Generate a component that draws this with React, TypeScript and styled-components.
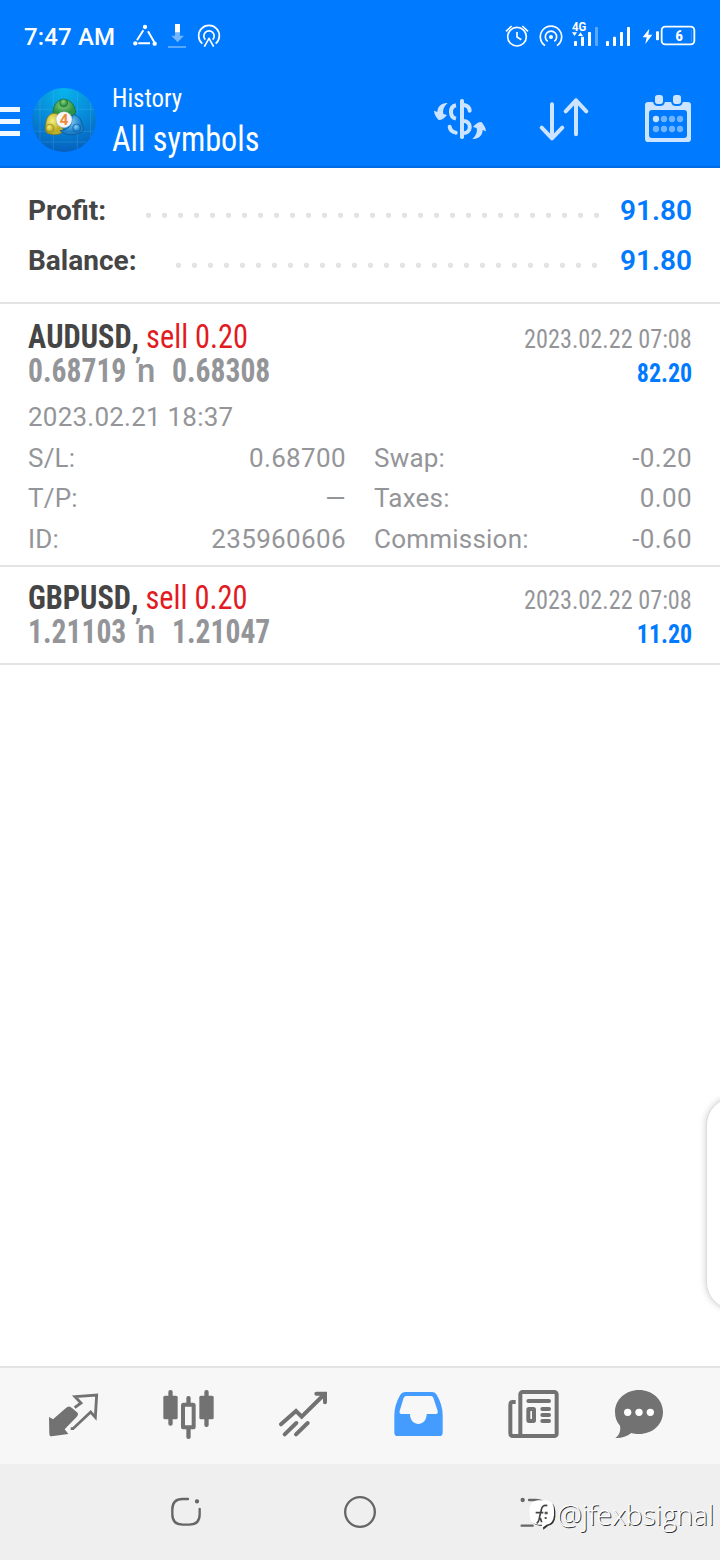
import React from 'react';
import styled, { createGlobalStyle } from 'styled-components';

const Global = createGlobalStyle`
  * { box-sizing: border-box; }
  body { margin: 0; background: #fff; font-family: Roboto, 'Liberation Sans', sans-serif; }
  svg { display: block; flex: none; }
`;

const Screen = styled.div`
  position: relative;
  width: 720px;
  height: 1560px;
  overflow: hidden;
  display: flex;
  flex-direction: column;
  background: #fff;
`;

/* Condensed text, narrowed around its left or right edge */
const Condensed = styled.div<{ $scale?: number; $from?: 'left' | 'right' }>`
  font-stretch: 75%;
  white-space: pre;
  transform: scaleX(${p => p.$scale ?? 0.921});
  transform-origin: ${p => p.$from ?? 'left'} center;
`;

const TopArea = styled.header`
  background: #007aff;
  border-bottom: 2px solid #006de4;
  height: 168px;
  color: #fff;
  flex: none;
`;
const StatusBar = styled.div`
  height: 72px;
  display: flex;
  justify-content: space-between;
  padding: 0 20px 0 24px;
`;
const StatusSide = styled.div`
  display: flex;
`;
const Clock = styled.span`
  font-size: 24px;
  font-weight: 500;
  line-height: 74px;
  width: 106px;
  letter-spacing: 0.15px;
  white-space: nowrap;
`;
const AppBar = styled.div`
  display: flex;
  height: 94px;
`;
const MenuButton = styled.div`
  width: 32px;
  padding-top: 35px;
  display: flex;
  flex-direction: column;
  gap: 7px;
`;
const MenuBar = styled.i`
  width: 20px;
  height: 5px;
  background: #eff7ff;
`;
const LogoBox = styled.div`
  padding-top: 16px;
  width: 80px;
`;
const Titles = styled.div`
  width: 296px;
  padding-top: 10px;
`;
const Subtitle = styled(Condensed)`
  font-size: 26px;
  line-height: 32px;
`;
const Title = styled(Condensed)`
  font-size: 35px;
  line-height: 51px;
`;

const Summary = styled.section`
  border-bottom: 2px solid #e4e4e4;
  padding: 18px 28px 16px;
  height: 136px;
  flex: none;
`;
const SummaryRow = styled.div`
  display: flex;
  font-size: 28px;
  line-height: 50px;
  font-weight: 700;
`;
const SummaryLabel = styled.span<{ $width: number }>`
  width: ${p => p.$width}px;
  color: #454545;
`;
const Dots = styled.span`
  flex: 1;
  height: 6px;
  margin: 26px 19px 0 0;
  background: radial-gradient(circle at 2.5px 3.3px, #e3e3e3 2.2px, transparent 3px) 0 0 / 16px 6px repeat-x;
`;
const SummaryValue = styled.span`
  width: 72px;
  text-align: right;
  color: #007aff;
  font-weight: 600;
`;

const Trade = styled.article<{ $top: number; $bottom: number }>`
  border-bottom: 2px solid #e4e4e4;
  padding: ${p => p.$top}px 28px ${p => p.$bottom}px;
  flex: none;
`;
const TradeLine = styled.div`
  display: flex;
  justify-content: space-between;
  align-items: baseline;
  height: 34px;
  line-height: 34px;
`;
const Symbol = styled(Condensed)`
  font-size: 33px;
  font-weight: 700;
  font-kerning: none;
  color: #454545;
`;
const Side = styled.span`
  font-weight: 400;
  color: #e11b1f;
`;
const Prices = styled.div`
  display: flex;
  font-size: 32.5px;
  color: #949599;
`;
const Price = styled(Condensed)`
  width: 109px;
  font-weight: 700;
`;
const Marker = styled.span`
  width: 35px;
  font-size: 33px;
  font-weight: 500;
`;
const CloseTime = styled(Condensed)`
  font-size: 26px;
  color: #949599;
`;
const TradeProfit = styled(Condensed)`
  font-size: 26px;
  font-weight: 700;
  color: #007aff;
`;
const Details = styled.div`
  padding-top: 9px;
  font-size: 26px;
  line-height: 40.5px;
  letter-spacing: 0.22px;
  color: #949599;
  display: grid;
  grid-template-columns: 318px 318px;
  column-gap: 28px;
`;
const OpenTime = styled.div`
  grid-column: 1 / 3;
`;
const Detail = styled.div`
  display: flex;
  justify-content: space-between;
`;
const DetailValue = styled.span`
  letter-spacing: 0.36px;
`;

const Spacer = styled.main`
  flex: 1;
`;
const EdgePanel = styled.aside`
  position: absolute;
  left: 706px;
  top: 1097px;
  width: 70px;
  height: 213px;
  border-radius: 28px;
  background: #fff;
  border: 1px solid #dcdcdc;
  box-shadow: 0 0 7px rgba(0, 0, 0, 0.2);
`;

const TabBar = styled.nav`
  height: 98px;
  flex: none;
  border-top: 2px solid #e3e3e3;
  background: #f7f7f7;
  padding-left: 16px;
  display: flex;
`;
const SystemBar = styled.footer`
  height: 96px;
  flex: none;
  background: #efefef;
  padding-left: 99px;
  display: flex;
`;
const Watermark = styled.div`
  position: absolute;
  left: 529px;
  top: 1495px;
  display: flex;
  align-items: center;
  height: 40px;
`;
const Handle = styled.span`
  font: 300 28px/36px 'Open Sans', sans-serif;
  padding-bottom: 2px;
  color: #fff;
  text-shadow: 1px 1px 0.5px #333;
`;

const TabIcon = ({ x, children }: { x: number; children: React.ReactNode }) => (
  <svg width="115" height="96" viewBox={`${x} 24 345 288`} fill="#727272" stroke="none">{children}</svg>
);
const ActionIcon = ({ x, children }: { x: number; children: React.ReactNode }) => (
  <svg width="104" height="94" viewBox={`${x} 216 312 282`} fill="#cce4ff">{children}</svg>
);
const SystemIcon = ({ x, children }: { x: number; children?: React.ReactNode }) => (
  <svg width="174" height="96" viewBox={`${x} -18 522 288`} fill="none" stroke="#666" strokeWidth="7" strokeLinecap="round">
    {children}
  </svg>
);

const LeftStatusIcons = () => (
  <svg width="100" height="72" viewBox="390 0 300 216" fill="none" stroke="#fff" strokeWidth="6">
    <path d="M430 91L411 121M444 94L463 127M415 130H450" />
    <g fill="#fff" stroke="none">
      <circle cx="435" cy="81" r="6.5" /><circle cx="406" cy="130" r="6.5" /><circle cx="464" cy="131" r="6.5" />
      <path d="M525 72h15v25h-15z" />
      <path d="M525 97h15v10h12l-19 20l-19-20h11z" opacity=".45" />
      <path d="M504 138h54v6h-54z" opacity=".35" />
    </g>
    <path d="M607 131A31 31 0 1 1 647 131" strokeWidth="5" />
    <path d="M616 119A15.500 15.500 0 1 1 638 119" strokeWidth="5" />
    <path d="M613 140L627 115L641 140" strokeWidth="5" strokeLinejoin="round" />
  </svg>
);

const RightStatusIcons = () => (
  <svg width="200" height="72" viewBox="240 0 600 216" fill="none" stroke="#fff" strokeWidth="5">
    <circle cx="291" cy="110" r="28" />
    <path d="M291 96V111L304 119M258 94L275 78M307 78L324 94" />
    <path d="M375 137A32 32 0 1 1 411 137" />
    <path d="M383 124A17 17 0 1 1 403 124" />
    <g fill="#fff" stroke="none">
      <circle cx="393" cy="111" r="6" />
      <text x="456" y="93" fontFamily="Roboto" fontWeight="700" fontSize="37" textLength="43" lengthAdjust="spacingAndGlyphs">4G</text>
      <path d="M456 97h15l-7.500 11zM474 108h15l-7.500-11z" />
      <rect x="462" y="123" width="9" height="15" rx="2" /><rect x="483" y="110" width="9" height="28" rx="2" />
      <rect x="504" y="96" width="9" height="42" rx="2" /><rect x="525" y="81" width="9" height="57" rx="2" opacity=".35" />
      <rect x="558" y="123" width="9" height="15" rx="2" /><rect x="579" y="110" width="9" height="28" rx="2" />
      <rect x="600" y="96" width="9" height="42" rx="2" /><rect x="621" y="81" width="9" height="57" rx="2" />
      <path d="M688 86L668 112H680L676 132L697 104H685z" />
      <rect x="708" y="94" width="9" height="27" rx="3" />
      <text x="777" y="122" fontFamily="Roboto" fontWeight="700" fontSize="46" textAnchor="middle" fontStretch="75%">6</text>
    </g>
    <rect x="725" y="80" width="98" height="53" rx="11" strokeWidth="5.5" />
    <path d="M814 88V126" strokeWidth="2" opacity=".3" />
  </svg>
);

const Logo = () => (
  <svg width="64" height="64" viewBox="12 12 192 192">
    <defs>
      <radialGradient id="disc" cx=".5" cy=".05" r=".95">
        <stop offset="0" stopColor="#08b4ec" /><stop offset=".5" stopColor="#078cda" /><stop offset="1" stopColor="#0560bd" />
      </radialGradient>
      <radialGradient id="green" cx=".45" cy=".35"><stop offset="0" stopColor="#8ed07c" /><stop offset="1" stopColor="#2c9445" /></radialGradient>
      <radialGradient id="gold" cx=".4" cy=".35"><stop offset="0" stopColor="#f6ef7c" /><stop offset="1" stopColor="#bcae28" /></radialGradient>
      <radialGradient id="azure" cx=".4" cy=".35"><stop offset="0" stopColor="#84d2fa" /><stop offset="1" stopColor="#1c7fca" /></radialGradient>
      <clipPath id="round"><circle cx="108" cy="108" r="96" /></clipPath>
    </defs>
    <circle cx="108" cy="108" r="96" fill="url(#disc)" />
    <path clipPath="url(#round)" d="M36 0V216M76 0V216M148 0V216M188 0V216M0 76H216M0 142H216M0 174H216" stroke="#7fd0ff" strokeOpacity=".18" strokeWidth="3" />
    <path d="M107 46C128 46 143 66 142 84C141 94 134 98 127 94C114 80 101 80 88 94C78 98 73 88 76 76C80 58 92 46 107 46z" fill="url(#green)" stroke="#11602b" strokeWidth="2" />
    <path d="M79 88C64 88 54 102 53 122C50 134 52 148 66 150C84 154 99 152 104 142C108 132 101 128 92 124C84 118 84 108 90 96C90 90 86 88 79 88z" fill="url(#gold)" stroke="#7d7212" strokeWidth="2" />
    <path d="M139 92C153 96 162 110 163 124C170 132 166 146 152 148C134 155 112 154 96 140C114 138 128 130 131 114C132 104 130 92 139 92z" fill="url(#azure)" stroke="#0b4b86" strokeWidth="2" />
    <circle cx="107" cy="57" r="12" fill="url(#green)" stroke="#11602b" strokeWidth="1.500" />
    <circle cx="66" cy="133" r="12" fill="url(#gold)" stroke="#7d7212" strokeWidth="1.500" />
    <circle cx="146" cy="132" r="12" fill="url(#azure)" stroke="#0b4b86" strokeWidth="1.500" />
    <circle cx="108" cy="107" r="24" fill="#f7f7f7" stroke="#aebfc8" strokeWidth="1.500" />
    <text x="108" y="123" fontFamily="Roboto" fontWeight="700" fontSize="45" textAnchor="middle" fill="#f18a35">4</text>
  </svg>
);

const SwapArrow = () => (
  <path d="M83 309C64 308 53 319 52 336L42 332C43 345 50 353 56 360C66 360 74 354 81 345L70 342C67 330 72 319 83 309z" />
);

const trades = [
  {
    symbol: 'AUDUSD', side: 'sell 0.20', open: '0.68719', close: '0.68308', time: '2023.02.22 07:08', profit: '82.20',
    opened: '2023.02.21 18:37',
    details: [['S/L:', '0.68700'], ['Swap:', '-0.20'], ['T/P:', '—'], ['Taxes:', '0.00'], ['ID:', '235960606'], ['Commission:', '-0.60']],
  },
  { symbol: 'GBPUSD', side: 'sell 0.20', open: '1.21103', close: '1.21047', time: '2023.02.22 07:08', profit: '11.20' },
];

export default function App() {
  return (
    <Screen>
      <Global />
      <TopArea>
        <StatusBar>
          <StatusSide><Clock>7:47 AM</Clock><LeftStatusIcons /></StatusSide>
          <StatusSide><RightStatusIcons /></StatusSide>
        </StatusBar>
        <AppBar>
          <MenuButton><MenuBar /><MenuBar /><MenuBar /></MenuButton>
          <LogoBox><Logo /></LogoBox>
          <Titles>
            <Subtitle $scale={0.955}>History</Subtitle>
            <Title>All symbols</Title>
          </Titles>
          <ActionIcon x={-36}>
            <SwapArrow />
            <g transform="rotate(180 120 363)"><SwapArrow /></g>
            <rect x="120" y="297" width="12" height="120" rx="5" />
            <g fill="none" stroke="#cce4ff" strokeWidth="12">
              <path d="M108 316C88 320 88 351 108 356" />
              <path d="M132 315Q148 318 149 332" strokeLinecap="round" />
              <path d="M132 363C155 365 155 396 132 400" />
              <path d="M89 380Q91 394 107 398" strokeLinecap="round" />
            </g>
          </ActionIcon>
          <ActionIcon x={276}>
            <path d="M396 313V414M365 383L396 415L427 383M468 403V301M437 334L468 301L499 334" fill="none" stroke="#cce4ff" strokeWidth="12" strokeLinecap="round" strokeLinejoin="round" />
          </ActionIcon>
          <ActionIcon x={588}>
            <path fillRule="evenodd" d="M685 306H803Q813 306 813 316V416Q813 426 803 426H685Q675 426 675 416V316Q675 306 685 306zM696 330Q687 330 687 339V405Q687 414 696 414H792Q801 414 801 405V339Q801 330 792 330z" />
            <g stroke="#007aff" strokeWidth="6">
              <rect x="702" y="282" width="30" height="33" rx="11" /><rect x="756" y="282" width="30" height="33" rx="11" />
            </g>
            {[357, 387].map(y => [708, 732, 756, 780].map(x => (
              <circle key={`${x}-${y}`} cx={x} cy={y} r="9.500" fill={x === 708 && y === 357 ? '#cce4ff' : '#70b4ff'} />
            )))}
          </ActionIcon>
        </AppBar>
      </TopArea>

      <Summary>
        <SummaryRow><SummaryLabel $width={118}>Profit:</SummaryLabel><Dots /><SummaryValue>91.80</SummaryValue></SummaryRow>
        <SummaryRow><SummaryLabel $width={148}>Balance:</SummaryLabel><Dots /><SummaryValue>91.80</SummaryValue></SummaryRow>
      </Summary>

      {trades.map(t => (
        <Trade key={t.symbol} $top={t.details ? 16 : 14} $bottom={t.details ? 6 : 14}>
          <TradeLine>
            <Symbol>{t.symbol}, <Side>{t.side}</Side></Symbol>
            <CloseTime $scale={0.933} $from="right">{t.time}</CloseTime>
          </TradeLine>
          <TradeLine>
            <Prices>
              <Price $scale={0.91}>{t.open}</Price>
              <Marker>ŉ</Marker>
              <Price $scale={0.91}>{t.close}</Price>
            </Prices>
            <TradeProfit $scale={0.92} $from="right">{t.profit}</TradeProfit>
          </TradeLine>
          {t.details && (
            <Details>
              <OpenTime>{t.opened}</OpenTime>
              {t.details.map(([k, v]) => <Detail key={k}><span>{k}</span><DetailValue>{v}</DetailValue></Detail>)}
            </Details>
          )}
        </Trade>
      ))}
      <Spacer />

      <TabBar>
        <TabIcon x={-42}>
          <path d="M57 171L69 178L107 145Q117 134 126 144L141 157Q148 163 139 172L104 208L115 222L65 229Q58 229 58 221z" />
          <path d="M134 143L153 129L135 110L200 105L196 172L182 156L129 206H122" fill="none" stroke="#727272" strokeWidth="8.500" />
        </TabIcon>
        <TabIcon x={303}>
          <rect x="400" y="107" width="43" height="71" rx="5" /><rect x="415" y="90" width="13" height="107" rx="6" />
          <rect x="508" y="107" width="43" height="71" rx="5" /><rect x="523" y="90" width="13" height="111" rx="6" />
          <rect x="469" y="108" width="13" height="28" rx="6" /><rect x="469" y="200" width="13" height="37" rx="6" />
          <rect x="459" y="134" width="32" height="68" rx="2" fill="none" stroke="#727272" strokeWidth="12" />
        </TabIcon>
        <TabIcon x={648}>
          <path d="M753 193L798 153L815 170L884 102M859 101H885V127M764 223L799 189M798 223L833 189" fill="none" stroke="#727272" strokeWidth="12" strokeLinecap="round" />
        </TabIcon>
        <TabIcon x={-27}>
          <path fill="#449cff" fillRule="evenodd" d="M105 96H187Q196 96 200 104Q218 135 218 165V218Q218 228 208 228H83Q73 228 73 218V165Q73 135 91 104Q96 96 105 96zM108 108Q104 108 101 113L89 153Q87 162 94 162H120C120 202 170 202 170 162H197Q205 162 203 153L190 113Q188 108 183 108z" />
        </TabIcon>
        <TabIcon x={318}>
          <g fill="none" stroke="#727272">
            <rect x="451" y="96" width="109" height="132" rx="7" strokeWidth="12" />
            <path d="M437 126H428Q421 126 421 135V220Q421 228 429 228H455" strokeWidth="12" />
            <path d="M475 123H537M517 147H537M517 165H537M517 183H537" strokeWidth="12" strokeLinecap="round" />
            <rect x="475" y="147" width="17" height="36" rx="2" strokeWidth="12" />
          </g>
        </TabIcon>
        <TabIcon x={663}>
          <path d="M807 90C847 90 879 119 879 156C879 194 847 222 807 222C798 222 791 221 784 219C770 230 753 235 736 234C747 226 753 213 750 197C740 186 735 172 735 156C735 119 767 90 807 90z" />
          <g fill="#fff"><circle cx="773" cy="157" r="11" /><circle cx="807" cy="157" r="11" /><circle cx="841" cy="157" r="11" /></g>
        </TabIcon>
      </TabBar>

      <SystemBar>
        <SystemIcon x={-153}>
          <path d="M114 87H98Q67 87 67 118V133Q67 164 98 164H118Q149 164 149 133V117" />
          <circle cx="141" cy="94" r="3" />
        </SystemIcon>
        <SystemIcon x={369}><circle cx="630" cy="126" r="44.500" /></SystemIcon>
        <SystemIcon x={-159}>
          <circle cx="68" cy="90" r="3" />
          <path d="M87 90H106Q138 90 143 120M98 167H65" />
        </SystemIcon>
      </SystemBar>

      <EdgePanel />
      <Watermark>
        <svg width="28" height="34" viewBox="87 92 84 102">
          <path d="M119 103H141Q166 105 166 132V148Q164 172 145 175L130 187L128 175H119Q95 173 93 148V130Q93 105 119 103z" fill="#333" />
          <path d="M114 99H138Q162 101 162 128V144Q160 170 140 172L126 182V172H114Q91 170 89 146V126Q90 101 114 99z" fill="#fff" />
          <path d="M142 115Q126 111 124 128L119 148Q117 164 110 168M107 136H130M121 152L125 165" fill="none" stroke="#444" strokeWidth="5" />
          <path d="M134 133h9v8h-9zM134 149h6v6h-6z" fill="#555" />
        </svg>
        <Handle>@jfexbsignal</Handle>
      </Watermark>
    </Screen>
  );
}
